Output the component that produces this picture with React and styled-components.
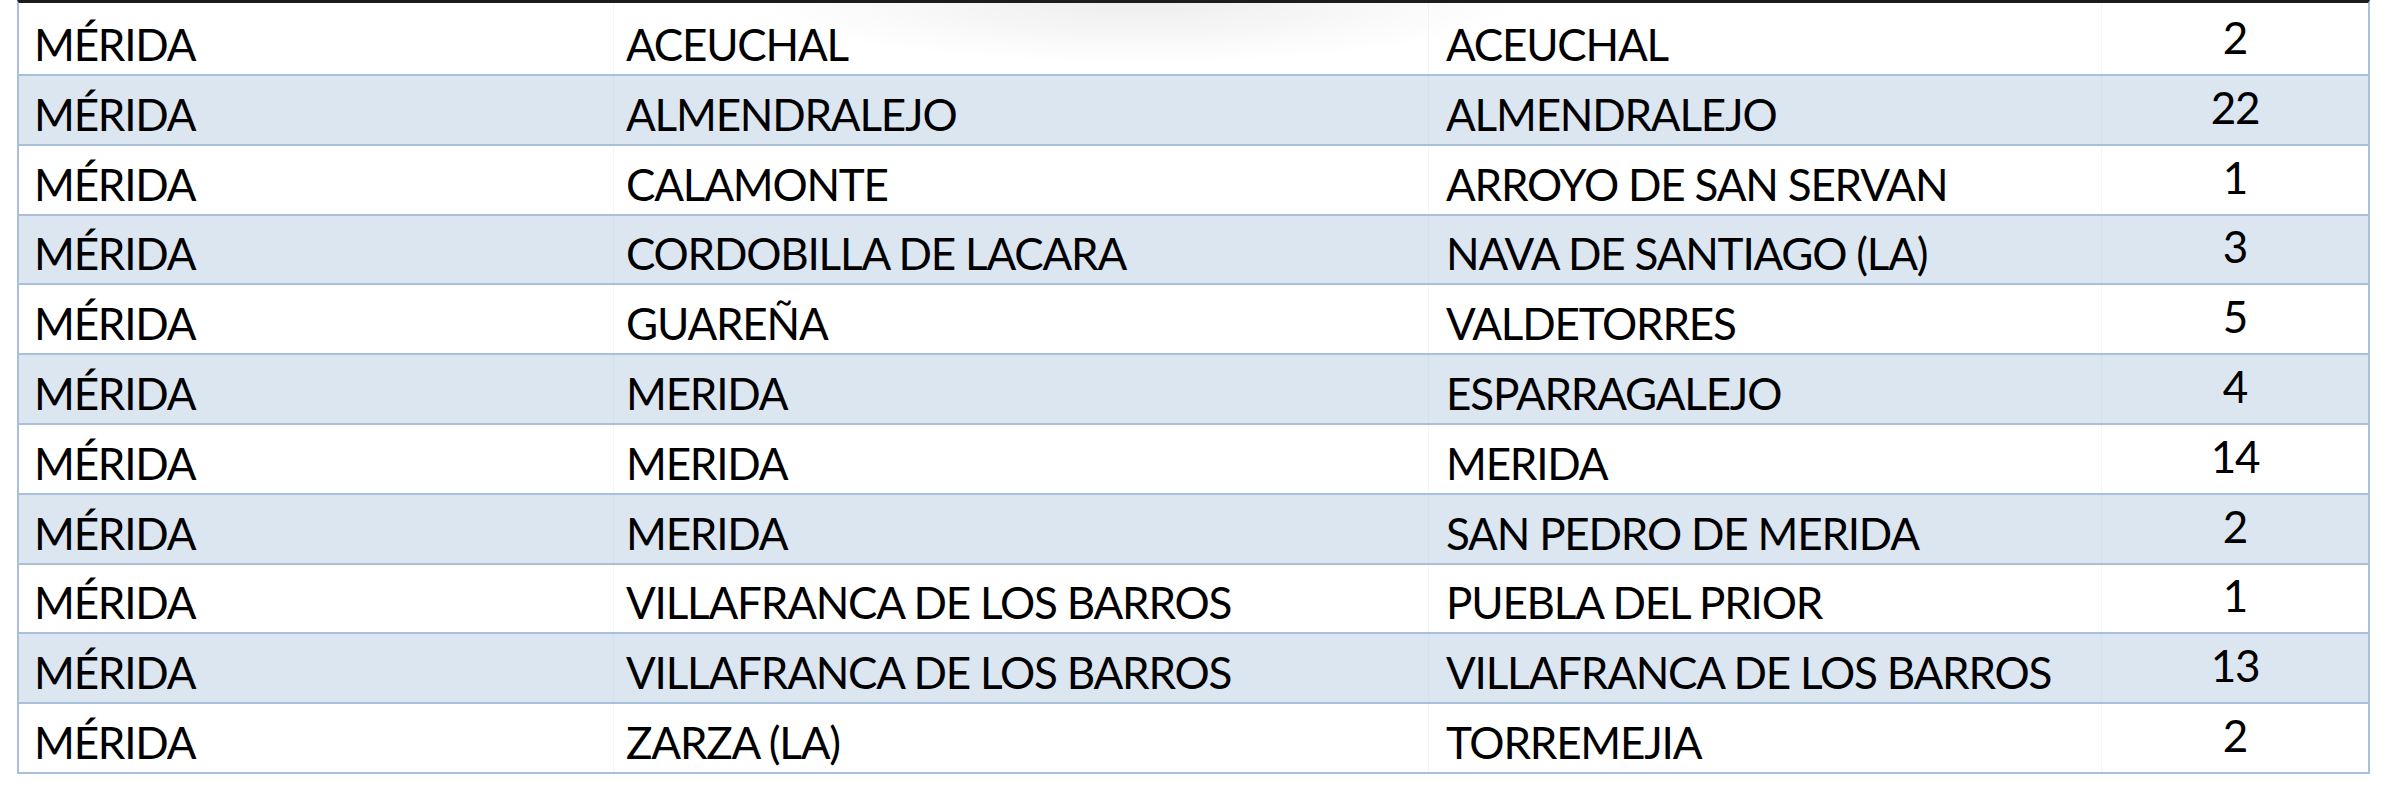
import React from "react";
import styled, { createGlobalStyle } from "styled-components";

const rows = [
  ["MÉRIDA", "ACEUCHAL", "ACEUCHAL", 2],
  ["MÉRIDA", "ALMENDRALEJO", "ALMENDRALEJO", 22],
  ["MÉRIDA", "CALAMONTE", "ARROYO DE SAN SERVAN", 1],
  ["MÉRIDA", "CORDOBILLA DE LACARA", "NAVA DE SANTIAGO (LA)", 3],
  ["MÉRIDA", "GUAREÑA", "VALDETORRES", 5],
  ["MÉRIDA", "MERIDA", "ESPARRAGALEJO", 4],
  ["MÉRIDA", "MERIDA", "MERIDA", 14],
  ["MÉRIDA", "MERIDA", "SAN PEDRO DE MERIDA", 2],
  ["MÉRIDA", "VILLAFRANCA DE LOS BARROS", "PUEBLA DEL PRIOR", 1],
  ["MÉRIDA", "VILLAFRANCA DE LOS BARROS", "VILLAFRANCA DE LOS BARROS", 13],
  ["MÉRIDA", "ZARZA (LA)", "TORREMEJIA", 2],
];

const GlobalStyle = createGlobalStyle`
  html, body {
    margin: 0;
    padding: 0;
    background: #ffffff;
  }
  body {
    width: 2383px;
    height: 812px;
    overflow: hidden;
    font-family: Lato, "Liberation Sans", sans-serif;
  }
`;

const Page = styled.div`
  padding: 0 13px 0 17px;
`;

const Sheet = styled.div`
  width: 2353px;
  border-top: 3px solid #1c1c1c;
  border-left: 2px solid #a9bfdc;
  border-right: 2px solid #a9bfdc;
  box-sizing: border-box;
`;

const Row = styled.div`
  display: grid;
  grid-template-columns: 595px 815px 673px 266px;
  height: ${(p) => (p.$first ? "73px" : "69.8px")};
  box-sizing: border-box;
  border-bottom: 2px solid #a9bfdc;
  background: ${(p) =>
    p.$first
      ? "radial-gradient(ellipse 380px 60px at 1120px 0px, rgba(0,0,0,0.07), rgba(0,0,0,0) 100%), #ffffff"
      : p.$alt
      ? "#dce6f1"
      : "#ffffff"};
`;

const Cell = styled.div`
  display: flex;
  align-items: flex-end;
  justify-content: ${(p) => (p.$center ? "center" : "flex-start")};
  padding-left: ${(p) => p.$pad || 0}px;
  padding-bottom: ${(p) => (p.$center ? 15 : 8)}px;
  box-sizing: border-box;
  border-right: ${(p) => (p.$last ? "none" : "1px solid rgba(160, 180, 205, 0.12)")};
  font-size: 44px;
  line-height: 1;
  color: #000000;
  white-space: nowrap;
  letter-spacing: -1.2px;
`;

export default function App() {
  return (
    <Page>
      <GlobalStyle />
      <Sheet>
        {rows.map((r, i) => (
          <Row key={i} $first={i === 0} $alt={i % 2 === 1}>
            <Cell $pad={15}>{r[0]}</Cell>
            <Cell $pad={12}>{r[1]}</Cell>
            <Cell $pad={17}>{r[2]}</Cell>
            <Cell $center $last>
              {r[3]}
            </Cell>
          </Row>
        ))}
      </Sheet>
    </Page>
  );
}
